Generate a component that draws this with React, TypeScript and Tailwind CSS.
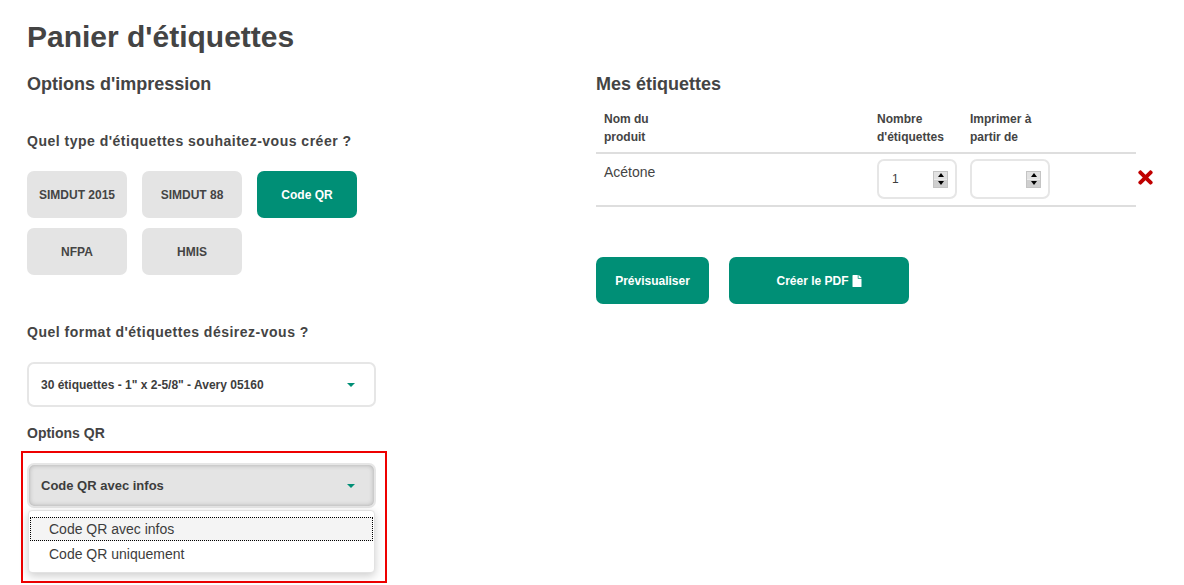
import React from 'react';
import { FaFile, FaTimes } from 'react-icons/fa';

function TypeButton({ label, active = false }: { label: string; active?: boolean }) {
  return (
    <button
      className={`w-[100px] h-[47px] rounded-[7px] text-[12px] font-bold ${
        active ? 'bg-[#008f76] text-white' : 'bg-[#e4e4e4] text-[#444444]'
      }`}
    >
      {label}
    </button>
  );
}

function SelectBox({ label, open = false }: { label: string; open?: boolean }) {
  return (
    <div
      className={`w-[349px] h-[45px] rounded-[7px] border-2 border-[#e6e6e6] pl-3 pr-[19px] flex items-center justify-between text-[12px] font-bold text-[#3d3d3d] ${
        open ? 'bg-[#e4e4e4] shadow-[inset_0_0_5px_rgba(0,0,0,0.25)]' : 'bg-white'
      }`}
    >
      <span className={open ? 'text-[13px]' : 'text-[12px]'}>{label}</span>
      <span className="w-0 h-0 border-x-[4px] border-x-transparent border-t-[4px] border-t-[#008f76]" />
    </div>
  );
}

function Spinner() {
  return (
    <div className="w-[15px] h-[17px] flex flex-col gap-px bg-[#ececec] border border-[#c4c4c4]">
      <div className="flex-1 flex items-center justify-center bg-[#e2e2e2]">
        <span className="w-0 h-0 border-x-[3px] border-x-transparent border-b-[4px] border-b-black" />
      </div>
      <div className="flex-1 flex items-center justify-center bg-[#cfcfcf]">
        <span className="w-0 h-0 border-x-[3px] border-x-transparent border-t-[4px] border-t-black" />
      </div>
    </div>
  );
}

function NumberBox({ value }: { value?: string }) {
  return (
    <div className="w-[80px] h-[40px] rounded-[7px] border-2 border-[#e6e6e6] pl-[13px] pr-[7px] flex items-center justify-between text-[12px] text-[#3d3d3d]">
      <span>{value}</span>
      <Spinner />
    </div>
  );
}

export default function App() {
  return (
    <div className="w-[1184px] h-[585px] overflow-hidden bg-white text-[#444444] font-['Liberation_Sans',Arial,sans-serif] pl-[27px] pt-[19px]">
      <h1 className="text-[30px] leading-[36px] font-bold text-[#444444]">Panier d'étiquettes</h1>

      <div className="flex mt-[17px]">
        {/* Left column */}
        <div className="w-[569px] shrink-0">
          <h2 className="text-[18px] leading-[24px] font-bold">Options d'impression</h2>

          <p className="mt-[35px] text-[14px] leading-[20px] font-bold tracking-[0.5px]">
            Quel type d'étiquettes souhaitez-vous créer ?
          </p>
          <div className="mt-[20px] w-[340px] flex flex-wrap gap-x-[15px] gap-y-[10px]">
            <TypeButton label="SIMDUT 2015" />
            <TypeButton label="SIMDUT 88" />
            <TypeButton label="Code QR" active />
            <TypeButton label="NFPA" />
            <TypeButton label="HMIS" />
          </div>

          <p className="mt-[47px] text-[14px] leading-[20px] font-bold tracking-[0.5px]">
            Quel format d'étiquettes désirez-vous ?
          </p>
          <div className="mt-[20px]">
            <SelectBox label={'30 étiquettes - 1" x 2-5/8" - Avery 05160'} />
          </div>

          <p className="mt-[16px] text-[14px] leading-[20px] font-bold">Options QR</p>

          <div className="mt-[8px] -ml-[6px] w-[366px] h-[132px] border-2 border-[#ee0000] pl-[4px] pt-[10px]">
            <SelectBox label="Code QR avec infos" open />
            <div className="mt-[2px] ml-px w-[347px] h-[63px] rounded-[4px] border border-[#e2e2e2] bg-white shadow-[0_3px_10px_rgba(0,0,0,0.2)] pt-[6px] text-[14px] text-[#3d3d3d]">
              <div className="mx-px h-[24px] leading-[22px] pl-[18px] bg-[#f4f4f4] border border-dotted border-black">
                Code QR avec infos
              </div>
              <div className="h-[26px] leading-[26px] pl-[20px]">Code QR uniquement</div>
            </div>
          </div>
        </div>

        {/* Right column */}
        <div className="w-[540px] shrink-0 relative">
          <h2 className="text-[18px] leading-[24px] font-bold">Mes étiquettes</h2>

          <div className="mt-[7px] h-[51px] flex pl-2 text-[12px] leading-[18px] font-bold border-b-2 border-[#dedede]">
            <div className="w-[273px] pt-[7px]">
              Nom du
              <br />
              produit
            </div>
            <div className="w-[93px] pt-[7px]">
              Nombre
              <br />
              d'étiquettes
            </div>
            <div className="pt-[7px]">
              Imprimer à
              <br />
              partir de
            </div>
          </div>

          <div className="h-[53px] flex pl-2 border-b-2 border-[#dedede]">
            <div className="w-[273px] pt-[9px] text-[14px] leading-[18px]">Acétone</div>
            <div className="w-[93px] pt-[5px]">
              <NumberBox value="1" />
            </div>
            <div className="pt-[5px]">
              <NumberBox />
            </div>
          </div>
          <FaTimes className="absolute left-[539px] top-[95px] w-[21px] h-[21px] text-[#c00000]" />

          <div className="mt-[50px] flex gap-[20px] text-[12px] font-bold text-white">
            <button className="w-[113px] h-[47px] rounded-[7px] bg-[#008f76]">Prévisualiser</button>
            <button className="w-[180px] h-[47px] rounded-[7px] bg-[#008f76] flex items-center justify-center gap-[3px]">
              Créer le PDF
              <FaFile className="w-[10px] h-[12px]" />
            </button>
          </div>
        </div>
      </div>
    </div>
  );
}
